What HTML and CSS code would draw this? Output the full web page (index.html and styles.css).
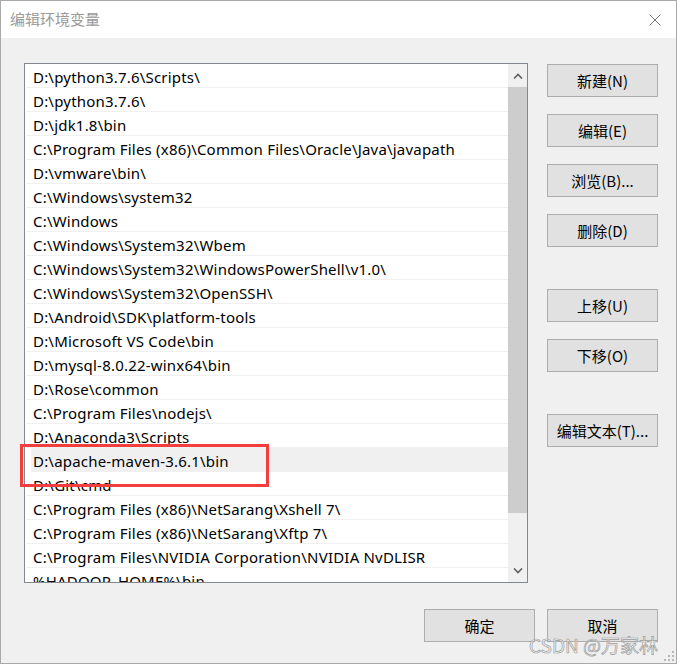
FILE: index.html
```html
<!DOCTYPE html>
<html lang="zh-CN">
<head>
  <meta charset="UTF-8" />
  <title>编辑环境变量</title>
  <link rel="stylesheet" href="styles.css">
</head>
<body>
  <div class="janela">
    <div class="titulo">
      <span class="titulo-texto">编辑环境变量</span>
      <svg class="fechar" width="12" height="12" viewBox="0 0 12 12">
        <path d="M0.5 0.5 L11.5 11.5 M11.5 0.5 L0.5 11.5" stroke="#777" stroke-width="1" fill="none"/>
      </svg>
    </div>

    <div class="conteudo">
      <div class="linha-principal">
        <div class="lista">
          <ul class="itens">
            <li>D:\python3.7.6\Scripts\</li>
            <li>D:\python3.7.6\</li>
            <li>D:\jdk1.8\bin</li>
            <li>C:\Program Files (x86)\Common Files\Oracle\Java\javapath</li>
            <li>D:\vmware\bin\</li>
            <li>C:\Windows\system32</li>
            <li>C:\Windows</li>
            <li>C:\Windows\System32\Wbem</li>
            <li>C:\Windows\System32\WindowsPowerShell\v1.0\</li>
            <li>C:\Windows\System32\OpenSSH\</li>
            <li>D:\Android\SDK\platform-tools</li>
            <li>D:\Microsoft VS Code\bin</li>
            <li>D:\mysql-8.0.22-winx64\bin</li>
            <li>D:\Rose\common</li>
            <li>C:\Program Files\nodejs\</li>
            <li>D:\Anaconda3\Scripts</li>
            <li class="selecionado">D:\apache-maven-3.6.1\bin</li>
            <li>D:\Git\cmd</li>
            <li>C:\Program Files (x86)\NetSarang\Xshell 7\</li>
            <li>C:\Program Files (x86)\NetSarang\Xftp 7\</li>
            <li>C:\Program Files\NVIDIA Corporation\NVIDIA NvDLISR</li>
            <li>%HADOOP_HOME%\bin</li>
          </ul>
          <div class="rolagem">
            <div class="seta">
              <svg width="10" height="6" viewBox="0 0 10 6"><path d="M1 5.5 L5 1.5 L9 5.5" stroke="#606060" stroke-width="1.6" fill="none"/></svg>
            </div>
            <div class="trilho"><div class="polegar"></div></div>
            <div class="seta">
              <svg width="10" height="6" viewBox="0 0 10 6"><path d="M1 0.5 L5 4.5 L9 0.5" stroke="#606060" stroke-width="1.6" fill="none"/></svg>
            </div>
          </div>
        </div>

        <div class="botoes">
          <button class="botao">新建(N)</button>
          <button class="botao">编辑(E)</button>
          <button class="botao">浏览(B)...</button>
          <button class="botao">删除(D)</button>
          <button class="botao grupo">上移(U)</button>
          <button class="botao">下移(O)</button>
          <button class="botao grupo">编辑文本(T)...</button>
        </div>
      </div>

      <div class="rodape">
        <button class="botao">确定</button>
        <button class="botao">取消</button>
      </div>
    </div>

    <div class="marca"></div>
    <div class="marca-dagua">CSDN @万家林</div>
    <svg class="alca" width="10" height="10" viewBox="0 0 10 10">
      <g fill="#b8b8b8">
        <rect x="8" y="0" width="2" height="2"/>
        <rect x="4" y="4" width="2" height="2"/><rect x="8" y="4" width="2" height="2"/>
        <rect x="0" y="8" width="2" height="2"/><rect x="4" y="8" width="2" height="2"/><rect x="8" y="8" width="2" height="2"/>
      </g>
    </svg>
  </div>
</body>
</html>
```

FILE: styles.css
```css
* {
  margin: 0; padding: 0; box-sizing: border-box;
}
body {
  font-family: 'Noto Sans', 'Noto Sans CJK SC', sans-serif;
  background: #f0f0f0;
}

.janela {
  width: 677px;
  height: 664px;
  border: 1px solid #a9a9a9;
  background: #f0f0f0;
  position: relative;
  overflow: hidden;
}

.titulo {
  height: 37px;
  background: #fff;
  display: flex;
  align-items: center;
  justify-content: space-between;
  padding: 0 15px 0 9px;
}

.titulo-texto {
  font-family: 'Noto Sans CJK SC', sans-serif;
  font-size: 15px;
  color: #999;
  margin-top: -2px;
}

.conteudo {
  padding: 25px 0 0 23px;
}

.linha-principal {
  display: flex;
  align-items: flex-start;
}

.lista {
  width: 504px;
  height: 520px;
  border: 1px solid #828790;
  background: #fff;
  display: flex;
  overflow: hidden;
}

.itens {
  list-style: none;
  flex: 1;
  height: 518px;
  padding-left: 1px;
  overflow: hidden;
}

.itens li {
  height: 24px;
  padding: 3px 0 0 7px;
  line-height: 20px;
  font-size: 15px;
  letter-spacing: 0.2px;
  color: #000;
  border-bottom: 1px solid #f0f0f0;
  white-space: nowrap;
}

.itens li.selecionado {
  background: #f0f0f0;
  margin-left: 5px;
  padding-left: 2px;
}

.rolagem {
  width: 19px;
  height: 518px;
  display: flex;
  flex-direction: column;
  background: #f0f0f0;
}

.seta {
  height: 23px;
  flex: none;
  display: flex;
  align-items: center;
  justify-content: center;
}

.trilho {
  height: 472px;
  flex: none;
}

.polegar {
  height: 426px;
  background: #cdcdcd;
}

.botoes {
  display: flex;
  flex-direction: column;
  gap: 17px;
  margin: 1px 0 0 19px;
}

.botao {
  width: 111px;
  height: 33px;
  background: #e1e1e1;
  border: 1px solid #adadad;
  font-family: 'Noto Sans CJK SC', sans-serif;
  font-size: 15px;
  color: #000;
}

.botao.grupo {
  margin-top: 25px;
}

.rodape {
  display: flex;
  justify-content: flex-end;
  gap: 12px;
  padding-right: 18px;
  margin-top: 26px;
}

.marca {
  position: absolute;
  left: 19px;
  top: 443px;
  width: 249px;
  height: 43px;
  border: 3px solid #f43e3e;
}

.marca-dagua {
  position: absolute;
  left: 528px;
  top: 632px;
  font-family: 'Noto Sans CJK SC', sans-serif;
  font-size: 19px;
  line-height: 24px;
  color: rgba(255, 255, 255, 0.7);
  -webkit-text-stroke: 0.7px #9a9a9a;
}

.alca {
  position: absolute;
  right: 2px;
  bottom: 2px;
}
```
